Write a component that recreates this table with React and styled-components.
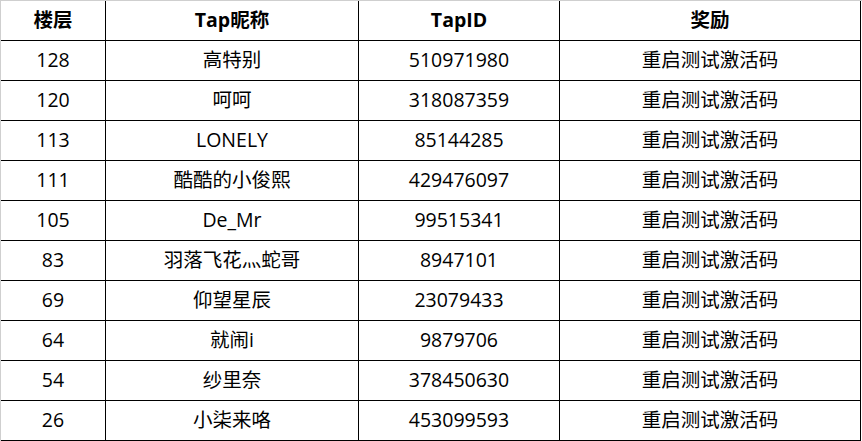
import React from 'react'
import styled, { createGlobalStyle } from 'styled-components'

const GlobalStyle = createGlobalStyle`
    html, body {
        margin: 0;
        padding: 0;
        background: #fff;
    }
    body {
        font-family: "Open Sans", "Noto Sans CJK SC", sans-serif;
    }
`;

const Sheet = styled.div`
    width: 862px;
    height: 441px;
    box-sizing: border-box;
    border-top: 1px solid #cfcfcf;
    border-left: 1px solid #cfcfcf;
    overflow: hidden;
`;

const Grid = styled.div`
    display: grid;
    grid-template-columns: 105px 253px 201px 301px;
    grid-auto-rows: 40px;
`;

const Cell = styled.div`
    box-sizing: border-box;
    border-right: 1px solid #000;
    border-bottom: 1px solid #000;
    display: flex;
    align-items: center;
    justify-content: center;
    padding-bottom: 1px;
    font-size: 19.5px;
    line-height: 1;
    font-weight: ${props => (props.head ? 700 : 400)};
    color: #000;
    white-space: nowrap;
`;

const columns = ['楼层', 'Tap昵称', 'TapID', '奖励']

const rows = [
    ['128', '高特别', '510971980'],
    ['120', '呵呵', '318087359'],
    ['113', 'LONELY', '85144285'],
    ['111', '酷酷的小俊熙', '429476097'],
    ['105', 'De_Mr', '99515341'],
    ['83', '羽落飞花灬蛇哥', '8947101'],
    ['69', '仰望星辰', '23079433'],
    ['64', '就闹i', '9879706'],
    ['54', '纱里奈', '378450630'],
    ['26', '小柒来咯', '453099593'],
]

export default function App() {
    return (
        <>
            <GlobalStyle />
            <Sheet>
                <Grid>
                    {columns.map(c => <Cell head key={c}>{c}</Cell>)}
                    {rows.map((r, i) => (
                        <React.Fragment key={i}>
                            <Cell>{r[0]}</Cell>
                            <Cell>{r[1]}</Cell>
                            <Cell>{r[2]}</Cell>
                            <Cell>重启测试激活码</Cell>
                        </React.Fragment>
                    ))}
                </Grid>
            </Sheet>
        </>
    )
}
